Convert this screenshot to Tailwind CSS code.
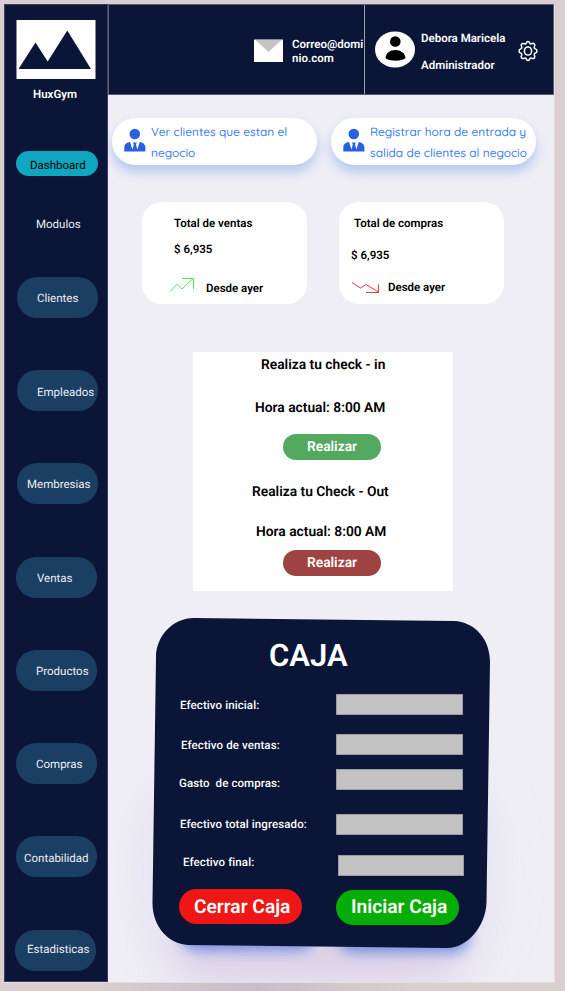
<!DOCTYPE html>
<html lang="es">
<head>
<meta charset="utf-8">
<title>HuxGym</title>
<script src="https://cdn.jsdelivr.net/npm/@tailwindcss/browser@4"></script>
</head>
<body class="w-[565px] h-[991px] overflow-hidden bg-[#dacece] font-['Roboto',sans-serif] text-black [text-rendering:geometricPrecision]">
<div class="w-[565px] h-[991px] overflow-hidden bg-radial-[at_45%_100%] from-[#cbbccb] to-[#dacece] to-35% pl-1 pt-1">
<div class="flex w-[551px] h-[979px] bg-[#efeef5] border-b border-r border-[#e4dcdf]">

  <aside class="w-[104px] h-[978px] shrink-0 bg-[#0a1537] border border-[#3b3f5c] pl-[11px] text-[11.500px] leading-[20px] text-[#eceef3] whitespace-nowrap">
    <svg class="block mt-[15px] w-[80px] h-[59px]" viewBox="0 0 80 59"><rect x="0.5" width="79" height="59" fill="#fff"/><path d="M2.500 49 19.500 22.500 31.700 41.500 51.300 10.500 75 49Z" fill="#0a1537"/></svg>
    <div class="mt-[5px] pl-[17px] font-semibold text-white">HuxGym</div>
    <div class="mt-[47px] w-[82px] h-[25px] rounded-full bg-[#0ea7bf] pl-[14px] pt-[4px] text-black">Dashboard</div>
    <div class="mt-[38px] pl-[20px]">Modulos</div>
    <div class="mt-[43px] ml-[1px] w-[81px] h-[41px] rounded-[20px] bg-[#1b3e63] pl-[20px] pt-[11px]">Clientes</div>
    <div class="mt-[52px] ml-[1px] w-[81px] h-[41px] rounded-[20px] bg-[#1b3e63] pl-[20px] pt-[12px]">Empleados</div>
    <div class="mt-[52px] ml-[1px] w-[81px] h-[41px] rounded-[20px] bg-[#1b3e63] pl-[10px] pt-[11px]">Membresias</div>
    <div class="mt-[53px] w-[81px] h-[41px] rounded-[20px] bg-[#1b3e63] pl-[21px] pt-[11px]">Ventas</div>
    <div class="mt-[52px] w-[81px] h-[41px] rounded-[20px] bg-[#1b3e63] pl-[20px] pt-[11px]">Productos</div>
    <div class="mt-[52px] w-[81px] h-[41px] rounded-[20px] bg-[#1b3e63] pl-[20px] pt-[11px]">Compras</div>
    <div class="mt-[52px] w-[81px] h-[41px] rounded-[20px] bg-[#1b3e63] pl-[8px] pt-[12px]">Contabilidad</div>
    <div class="mt-[53px] ml-[-1px] w-[81px] h-[41px] rounded-[20px] bg-[#1b3e63] pl-[12px] pt-[9px]">Estadisticas</div>
  </aside>

  <div class="w-[446px] h-[978px] shrink-0 overflow-hidden">
    <header class="flex h-[91px] bg-[#0a1537] border border-[#5b5e78] text-white font-semibold text-[11.500px] whitespace-nowrap">
      <div class="flex w-[256px] shrink-0 border-r border-[#9da0ae] pl-[145px] pt-[33px]">
        <svg class="block mt-[1px] w-[29px] h-[23px] shrink-0" viewBox="0 0 29 23"><path d="M0 0.500H29V23H0Z" fill="#fff"/><path d="M1.500 1H27.500L14.500 13Z" fill="#c4c4c4"/></svg>
        <div class="ml-[9px] mt-[-1px] leading-[14px]">Correo@domi<br>nio.com</div>
      </div>
      <svg class="block ml-[10px] mt-[26px] w-[40px] h-[37px] shrink-0" viewBox="0 0 40 37"><ellipse cx="20" cy="18.500" rx="20" ry="18" fill="#fff"/><circle cx="20.300" cy="10.500" r="5.300"/><path d="M10.500 27C11 22 15 19 20.300 19S30 22 30.500 27C28 30.500 13 30.500 10.500 27Z"/></svg>
      <div class="ml-[6px] mt-[23px] w-[97px] leading-[20px]">
        <div>Debora Maricela</div>
        <div class="mt-[7px]">Administrador</div>
      </div>
      <svg class="block mt-[35px] w-[20px] h-[22px] shrink-0" viewBox="0 0 20 22" fill="none" stroke="#fff" stroke-width="1.500" stroke-linejoin="round"><path d="M8.300 3.200Q8.600 1.500 10 1.500T11.700 3.200Q12.500 4.500 13.900 3.700 15.400 2.900 16.400 4.100T16.400 6.500Q15.800 8.300 17.300 8.900 19 9.500 19 11T17.300 13.100Q15.800 13.700 16.400 15.500 17.300 16.900 16.400 17.900T13.900 18.300Q12.500 17.500 11.700 18.800 11.400 20.500 10 20.500T8.300 18.800Q7.500 17.500 6.100 18.300 4.600 19 3.600 17.900T3.600 15.500Q4.200 13.700 2.700 13.100 1 12.500 1 11T2.700 8.900Q4.200 8.300 3.600 6.500 2.700 5.100 3.600 4.100T6.100 3.700Q7.500 4.500 8.300 3.200Z"/><ellipse cx="10" cy="11" rx="3.600" ry="4.100"/></svg>
    </header>

    <div class="flex gap-[14px] mt-[23px] pl-[4px] font-['Quicksand','Lato',sans-serif] font-medium text-[11.900px] leading-[21px] text-[#3b7ded] whitespace-nowrap">
      <div class="flex w-[205px] h-[47px] rounded-full bg-white pl-[12px] shadow-[0_7px_12px_#b4c8f0]">
        <svg class="block mt-[10px] w-[22px] h-[24px] shrink-0" viewBox="0 0 22 24" fill="#2860e1"><circle cx="10.800" cy="6" r="5.300"/><path d="M0.300 23.500V19C0.500 16 3 14.500 6 14L8.500 21.500 9.800 16.500 9 14.500H12.800L12 16.500 13.300 21.500 15.800 14C18.500 14.500 21 16 21.400 19V23.500Z"/></svg>
        <div class="ml-[5px] mt-[3px]"><div>Ver clientes que estan el</div><div>negocio</div></div>
      </div>
      <div class="flex w-[205px] h-[47px] rounded-full bg-white pl-[12px] shadow-[0_7px_12px_#b4c8f0]">
        <svg class="block mt-[10px] w-[22px] h-[24px] shrink-0" viewBox="0 0 22 24" fill="#2860e1"><circle cx="10.800" cy="6" r="5.300"/><path d="M0.300 23.500V19C0.500 16 3 14.500 6 14L8.500 21.500 9.800 16.500 9 14.500H12.800L12 16.500 13.300 21.500 15.800 14C18.500 14.500 21 16 21.400 19V23.500Z"/></svg>
        <div class="ml-[5px] mt-[3px]"><div>Registrar hora de entrada y</div><div>salida de clientes al negocio</div></div>
      </div>
    </div>

    <div class="flex gap-[32px] mt-[37px] pl-[34px] font-semibold text-[11.500px] leading-[20px] whitespace-nowrap">
      <section class="w-[165px] h-[102px] rounded-[20px] bg-white pt-[11px] pl-[27px]">
        <div class="pl-[5px]">Total de ventas</div>
        <div class="pl-[5px] mt-[6px]">$ 6,935</div>
        <div class="flex mt-[19px]">
          <svg class="block w-[26px] h-[16px] mt-[-1px]" viewBox="0 0 26 16" fill="none" stroke="#3fee55"><path d="M1 14.500 8.500 7 13 12 24 1.500M13 1.500H24.500V12"/></svg>
          <div class="ml-[11px]">Desde ayer</div>
        </div>
      </section>
      <section class="w-[165px] h-[102px] rounded-[20px] bg-white pt-[11px] pl-[12px]">
        <div class="pl-[3px]">Total de compras</div>
        <div class="mt-[12px]">$ 6,935</div>
        <div class="flex mt-[12px]">
          <svg class="block mt-[3px] w-[30px] h-[16px]" viewBox="0 0 30 16" fill="none" stroke="#f23434"><path d="M1 2.500 9.500 8 15 4.500 27.500 12M27.500 4.500V12.500H15"/></svg>
          <div class="ml-[7px]">Desde ayer</div>
        </div>
      </section>
    </div>

    <section class="mt-[48px] ml-[85px] w-[260px] h-[239px] bg-white pt-[3px] font-semibold text-[13.800px] leading-[20px] whitespace-nowrap">
      <div class="pl-[68px]">Realiza tu check - in</div>
      <div class="pl-[62px] mt-[23px]">Hora actual: 8:00 AM</div>
      <div class="mt-[16px] ml-[90px] w-[98px] h-[26px] rounded-full bg-[#52a95f] text-center leading-[26px] text-white">Realizar</div>
      <div class="pl-[59px] mt-[22px]">Realiza tu Check - Out</div>
      <div class="pl-[63px] mt-[20px]">Hora actual: 8:00 AM</div>
      <div class="mt-[8px] ml-[90px] w-[98px] h-[26px] rounded-full bg-[#9d4341] text-center leading-[26px] text-white">Realizar</div>
    </section>

    <section class="relative mt-[26px] ml-[44px] w-[339px] h-[332px] pt-[24px] text-white whitespace-nowrap">
      <svg class="absolute left-[-44px] top-[-30px] w-[446px] h-[396px]" viewBox="-44 -30 446 396">
        <defs>
          <filter id="soft" x="-50%" y="-100%" width="200%" height="300%"><feGaussianBlur stdDeviation="24"/></filter>
          <filter id="glow" x="-30%" y="-100%" width="160%" height="300%"><feGaussianBlur stdDeviation="7"/></filter>
        </defs>
        <rect x="-10" y="160" width="350" height="185" rx="60" fill="#d9d5ef" opacity="0.500" filter="url(#soft)"/>
        <rect x="20" y="315" width="290" height="50" rx="30" fill="#cdbcda" opacity="0.600" filter="url(#soft)"/>
        <rect x="30" y="303" width="132" height="30" rx="15" fill="#6e88df" filter="url(#glow)"/>
        <rect x="185" y="303" width="132" height="32" rx="16" fill="#6e88df" filter="url(#glow)"/>
        <path d="M42 1 302 4C322 5 338 21 338 45L334.500 285C334 310 314 332 294 331L36 328C16 327 0 309 0.500 285L4 40C4 20 20 1 42 1Z" fill="#0a1537"/>
      </svg>
      <div class="relative">
        <div class="pl-[117px] text-[31px] leading-[30px] font-semibold">CAJA</div>
        <div class="text-[11.500px] leading-[20px] font-medium tracking-[0.100px]">
          <div class="flex items-start justify-between pl-[28px] pr-[28px] mt-[22px] h-[41px]"><div class="pt-[2px]">Efectivo inicial:</div><div class="w-[127px] h-[21px] mt-[0.500px] bg-[#c2c2c2] border border-[#9a9ca3]"></div></div>
          <div class="flex items-start justify-between pl-[29px] pr-[28px] h-[35px]"><div class="pt-[1px]">Efectivo de ventas:</div><div class="w-[127px] h-[21px] bg-[#c2c2c2] border border-[#9a9ca3]"></div></div>
          <div class="flex items-start justify-between pl-[27px] pr-[28px] h-[45px]"><div class="pt-[4px] whitespace-pre">Gasto  de compras:</div><div class="w-[127px] h-[21px] bg-[#c2c2c2] border border-[#9a9ca3]"></div></div>
          <div class="flex items-start justify-between pl-[28px] pr-[28px] h-[41px]"><div>Efectivo total ingresado:</div><div class="w-[127px] h-[21px] bg-[#c2c2c2] border border-[#9a9ca3]"></div></div>
          <div class="flex items-start justify-between pl-[31px] pr-[27px] h-[34px]"><div class="mt-[-3px]">Efectivo final:</div><div class="w-[126px] h-[21px] bg-[#c2c2c2] border border-[#9a9ca3]"></div></div>
        </div>
        <div class="flex gap-[34px] pl-[27px] text-[19.200px] font-semibold leading-[36px]">
          <div class="w-[123px] h-[35px] rounded-full bg-[#f01616] pl-[15px]">Cerrar Caja</div>
          <div class="w-[123px] h-[35px] mt-[1px] rounded-full bg-[#06ad04] pl-[15px] leading-[34px]">Iniciar Caja</div>
        </div>
      </div>
    </section>
  </div>
</div>
</div>
</body>
</html>
